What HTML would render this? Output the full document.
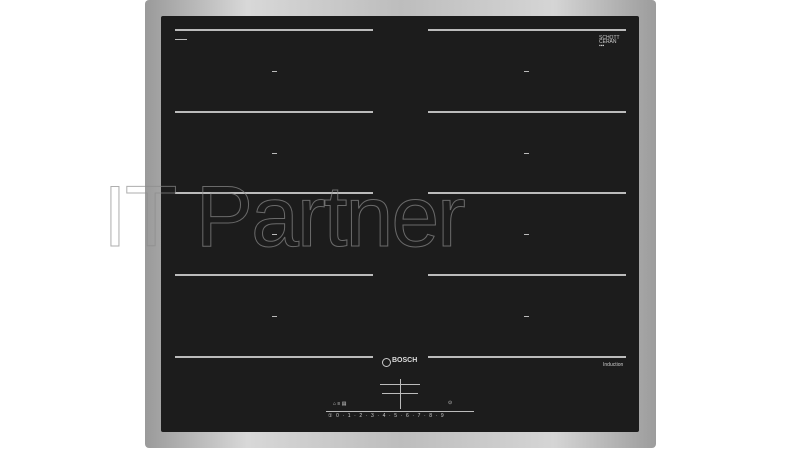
<html><head><style>
body{margin:0;width:800px;height:449px;background:#fff;position:relative;overflow:hidden;font-family:"Liberation Sans",sans-serif}
.frame{position:absolute;left:145px;top:0;width:511px;height:448px;border-radius:4px;background:linear-gradient(90deg,#9a9a9a,#d8d8d8 20%,#bdbdbd 50%,#d5d5d5 80%,#9c9c9c)}
.glass{position:absolute;left:161px;top:16px;width:478px;height:416px;background:#1c1c1c;border-radius:2px}
.l{position:absolute;height:1.5px;background:#bbb}
.d{position:absolute;width:5px;height:1px;background:#bbb}
.t{position:absolute;color:#ccc;font-size:5px}
.wm{position:absolute;left:103px;top:168px;font-size:86px;color:transparent;-webkit-text-stroke:1px rgba(140,140,140,0.7);letter-spacing:-2px;white-space:nowrap}
</style></head><body>
<div class="frame"></div>
<div class="glass"></div>
<div class="l" style="left:175px;top:29px;width:198px"></div>
<div class="l" style="left:428px;top:29px;width:198px"></div>
<div class="l" style="left:175px;top:111px;width:198px"></div>
<div class="l" style="left:428px;top:111px;width:198px"></div>
<div class="l" style="left:175px;top:192px;width:198px"></div>
<div class="l" style="left:428px;top:192px;width:198px"></div>
<div class="l" style="left:175px;top:274px;width:198px"></div>
<div class="l" style="left:428px;top:274px;width:198px"></div>
<div class="l" style="left:175px;top:356px;width:198px"></div>
<div class="l" style="left:428px;top:356px;width:198px"></div>
<div class="d" style="left:272px;top:71px"></div><div class="d" style="left:524px;top:71px"></div>
<div class="d" style="left:272px;top:153px"></div><div class="d" style="left:524px;top:153px"></div>
<div class="d" style="left:272px;top:234px"></div><div class="d" style="left:524px;top:234px"></div>
<div class="d" style="left:272px;top:316px"></div><div class="d" style="left:524px;top:316px"></div>
<div class="d" style="left:175px;top:39px;width:12px"></div>
<div class="t" style="left:599px;top:36px;line-height:4px">SCHOTT<br>CERAN<br>▪▪▪</div>
<div class="t" style="left:603px;top:362px">Induction</div>
<div style="position:absolute;left:382px;top:358px;width:7px;height:7px;border-radius:50%;border:1px solid #ccc"></div>
<div style="position:absolute;left:392px;top:357px;color:#ddd;font-size:7px;font-weight:bold">BOSCH</div>
<div class="l" style="left:380px;top:384px;width:40px;height:1px"></div>
<div class="l" style="left:382px;top:393px;width:36px;height:1px"></div>
<div class="l" style="left:400px;top:379px;width:1px;height:30px"></div>
<div class="l" style="left:326px;top:411px;width:148px;height:1px"></div>
<div class="t" style="left:328px;top:413px;font-size:5px;letter-spacing:3.6px">①0·1·2·3·4·5·6·7·8·9</div>
<div class="t" style="left:333px;top:401px">⌂ ≡ ▤</div>
<div class="t" style="left:448px;top:400px">⊙</div>
<div class="wm">IT Partner</div>
</body></html>
